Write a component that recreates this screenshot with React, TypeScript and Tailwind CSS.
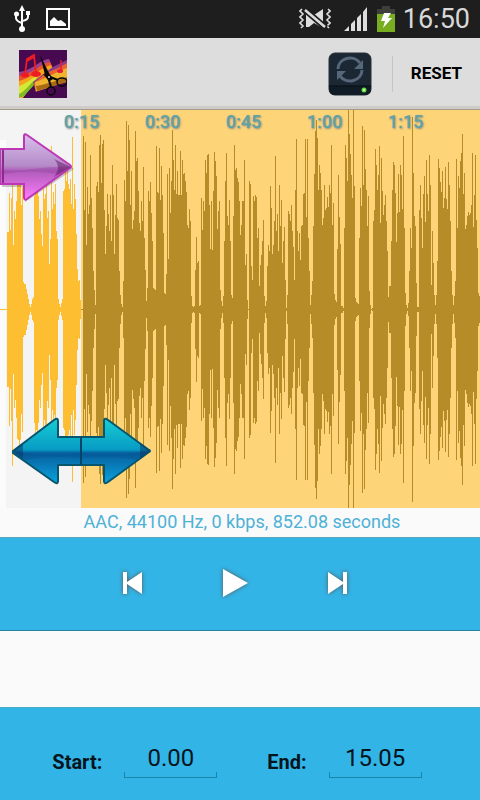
import React from 'react';

// Peak height of every sample column, measured from the centre line
const PEAKS = [
  0, 0, 0, 0, 0, 0, 0, 77, 77, 116, 79, 111, 156, 64, 98, 90, 108, 129, 130, 135,
  130, 104, 122, 27, 25, 25, 20, 15, 10, 5, 2, 5, 10, 12, 113, 128, 120, 128, 113, 90,
  98, 75, 63, 120, 110, 115, 125, 91, 98, 45, 70, 163, 100, 117, 105, 125, 78, 70, 10, 5,
  2, 6, 10, 118, 120, 138, 128, 138, 125, 120, 130, 105, 172, 100, 125, 110, 75, 40, 28, 29,
  9, 0, 0, 173, 99, 167, 64, 122, 95, 104, 154, 111, 81, 38, 19, 4, 123, 127, 117, 164,
  174, 126, 165, 169, 99, 55, 83, 115, 95, 78, 114, 68, 144, 114, 55, 94, 125, 91, 89, 38,
  14, 5, 2, 28, 129, 108, 188, 138, 184, 169, 104, 138, 80, 89, 98, 178, 148, 151, 118, 86,
  78, 108, 88, 142, 71, 39, 8, 21, 118, 108, 127, 96, 68, 21, 20, 19, 163, 117, 116, 161,
  109, 143, 114, 76, 16, 15, 35, 135, 50, 141, 96, 128, 179, 149, 119, 164, 115, 138, 114, 114,
  158, 114, 149, 135, 136, 128, 117, 84, 81, 100, 88, 13, 3, 2, 3, 39, 72, 46, 48, 3,
  4, 111, 79, 108, 98, 149, 136, 154, 155, 104, 60, 108, 59, 118, 157, 148, 133, 80, 98, 108,
  19, 8, 3, 13, 68, 128, 156, 93, 84, 109, 68, 14, 11, 93, 164, 139, 141, 131, 127, 108,
  74, 84, 108, 108, 149, 44, 55, 9, 0, 128, 125, 43, 29, 113, 108, 114, 112, 71, 81, 23,
  44, 54, 68, 89, 13, 3, 8, 43, 64, 58, 123, 101, 55, 64, 88, 153, 78, 95, 58, 124,
  83, 109, 46, 68, 82, 29, 1, 14, 98, 95, 88, 104, 78, 62, 29, 119, 170, 78, 58, 76,
  49, 83, 84, 115, 116, 170, 92, 170, 71, 38, 4, 14, 28, 83, 135, 178, 189, 171, 119, 144,
  136, 119, 84, 91, 124, 99, 101, 112, 102, 124, 116, 164, 84, 106, 15, 9, 7, 60, 134, 92,
  65, 3, 3, 1, 81, 164, 151, 128, 200, 175, 155, 134, 111, 200, 123, 11, 7, 6, 5, 71,
  121, 103, 183, 124, 179, 140, 119, 83, 113, 18, 4, 0, 1, 88, 99, 160, 144, 119, 134, 163,
  86, 151, 118, 94, 104, 114, 88, 58, 12, 23, 23, 68, 119, 147, 144, 116, 67, 96, 135, 97,
  144, 134, 100, 173, 81, 16, 4, 1, 6, 38, 81, 61, 192, 136, 93, 83, 26, 2, 2, 99,
  124, 91, 61, 115, 133, 87, 149, 115, 98, 154, 124, 24, 78, 46, 14, 4, 14, 48, 150, 141,
  127, 117, 138, 101, 111, 142, 110, 100, 147, 124, 88, 38, 14, 4, 13, 28, 150, 81, 133, 121,
  148, 156, 175, 115, 136, 80, 84, 93, 97, 94, 96, 104, 156, 82, 114, 154, 89, 61, 16, 13,
];

const SELECTION_START = 81;
const CENTER = 199;

const wavePath = (from: number, to: number) =>
  PEAKS.slice(from, to)
    .map((peak, i) => `M${from + i} ${CENTER - peak}h1v${peak * 2 + 1}h-1z`)
    .join('');

const TIMES = ['0:15', '0:30', '0:45', '1:00', '1:15'];

const StatusBar: React.FC = () => (
  <div className="flex h-[38px] shrink-0 items-center justify-between bg-[#1e1e1e] pr-[10px] pl-3">
    <div className="flex items-center gap-[14px]">
      <svg width="20" height="28" viewBox="0 0 20 28" fill="none" stroke="#fff" strokeWidth="2">
        <path d="M10 5v19M4 9v4q0 3 6 5M16 9v3q0 3-6 4" />
        <path d="M10 0l3 6H7z" fill="#fff" stroke="none" />
        <circle cx="10" cy="24" r="3" fill="#fff" stroke="none" />
        <circle cx="4.500" cy="9" r="2.500" fill="#fff" stroke="none" />
        <path d="M14 6h4v4h-4z" fill="#fff" stroke="none" />
      </svg>
      <svg width="24" height="22" viewBox="0 0 24 22">
        <path d="M1 1h22v20H1z" fill="none" stroke="#fff" strokeWidth="2" />
        <path d="M4 18v-5l4-4 4 4 3-1 5 4v2z" fill="#fff" />
      </svg>
    </div>
    <div className="flex items-center">
      <svg className="mr-3" width="32" height="22" viewBox="0 0 32 22" fill="none" stroke="#ddd">
        <path d="M3 1l-2 2 3 3-3 3 3 3-3 3 3 3-2 2M29 1l2 2-3 3 3 3-3 3 3 3-3 3 2 2" strokeWidth="1.600" />
        <path d="M7 5v14h3l5-4 9 5V1l-9 6z" fill="#ddd" stroke="none" />
        <path d="M5 1l22 19" stroke="#1e1e1e" strokeWidth="6" />
        <path d="M6 2l20 17" strokeWidth="2.500" />
      </svg>
      <svg className="mr-2" width="26" height="24" viewBox="0 0 26 24" fill="#ddd">
        <path d="M1 24l5-5v5zM8 17l4-4v11H8zM14 11l4-4v17h-4zM20 5l4-5v24h-4z" />
      </svg>
      <svg className="mr-2" width="18" height="26" viewBox="0 0 18 26">
        <path d="M5 0h8v3h5v5H0V3h5z" fill="#3d403a" />
        <path d="M0 8h18v18H0z" fill="#78ad20" />
        <path d="M7 7h7l-3 5h4L6 22l2-7H4z" fill="#fff" />
      </svg>
      <span className="text-[27px] leading-8 text-[#d8d8d8]">16:50</span>
    </div>
  </div>
);

const AppIcon: React.FC = () => (
  <svg width="48" height="48" viewBox="0 0 48 48">
    <path d="M0 0h48v48H0z" fill="#47094f" />
    <path d="M0 22C15 20 20 10 30 9l4 9C23 23 12 33 2 48H0z" fill="#9d3f90" />
    <path d="M0 26C14 24 22 13 31 12l3 7C22 23 12 34 2 48H0z" fill="#e85427" />
    <path d="M0 31c13-3 22-14 32-16l2 5C21 25 12 36 4 48H0z" fill="#f4a51e" />
    <path d="M0 36c9-3 14-9 18-10l-3 8L4 47H0z" fill="#d5e936" />
    <path d="M0 44c7-3 10-10 16-14l-1 5L4 47H0z" fill="#80bb22" />
    <path d="M31 19C37 15 42 13 48 10v23L17 42l-3-10z" fill="#8b3b87" />
    <path d="M27 23c9-3 14-6 21-10v21l-31 8-2-9z" fill="#ed642b" />
    <path d="M16 32c12-4 21-10 32-14v14l-31 10z" fill="#efb52d" />
    <path d="M17 36c12-2 21-6 31-9v5l-30 9z" fill="#a86b14" />
    <path d="M38 35l10-3v16H16v-6z" fill="#47094f" />
    <path d="M6 25l2-16 7-4 2 19M8 11l7-4" fill="none" stroke="#ed1c24" strokeWidth="1.800" />
    <ellipse cx="6" cy="25" rx="4" ry="2.500" fill="#ed1c24" />
    <ellipse cx="17" cy="24" rx="5" ry="3" fill="#ed1c24" />
    <path d="M42 10v12" stroke="#e51b38" strokeWidth="1.500" />
    <ellipse cx="41" cy="21" rx="3" ry="2" fill="#e51b38" />
    <path d="M21 5l9 18 4 6-3 2-5-6z" fill="#080808" />
    <path d="M24 24l7 1 1 4-3 1z" fill="#080808" />
    <path d="M29 27l3 10M31 27l8 3" stroke="#080808" strokeWidth="2" />
    <circle cx="32" cy="41" r="4" fill="none" stroke="#080808" strokeWidth="1.500" />
    <ellipse cx="43" cy="32" rx="5" ry="4" fill="none" stroke="#080808" strokeWidth="1.500" />
    <circle cx="30" cy="27" r="1" fill="#ddd" />
  </svg>
);

const ActionBar: React.FC = () => (
  <header className="flex h-[71px] shrink-0 items-center justify-between border-b-[3px] border-[#cfcbc8] bg-[#ddd] pt-1 pl-[19px]">
    <AppIcon />
    <div className="flex items-center">
      <button type="button" aria-label="Refresh" className="mr-5">
        <svg width="44" height="44" viewBox="0 0 44 44">
          <rect x="1" y="1" width="42" height="42" rx="6" fill="#1b2733" stroke="#26303b" />
          <path d="M1 34h42v3q0 6-6 6H7q-6 0-6-6z" fill="#111b26" />
          <path d="M1 34h42" stroke="#070d13" />
          <g fill="none" stroke="#56677a" strokeWidth="3">
            <path d="M10 17A12 11 0 0 1 32 11" />
            <path d="M34 18A12 11 0 0 1 12 24" />
          </g>
          <path d="M35 8v9h-9zM9 28v-9h9z" fill="#56677a" />
          <circle cx="36" cy="38" r="2.500" fill="#58df35" />
          <circle cx="36" cy="38" r="1.200" fill="#d0ffc0" />
        </svg>
      </button>
      <button type="button" className="h-9 border-l border-[#c4c4c4] pr-[18px] pl-[18px] text-[17px] font-bold text-black">
        RESET
      </button>
    </div>
  </header>
);

const StartHandle: React.FC = () => (
  <svg className="absolute top-[22px] left-0" width="76" height="72" viewBox="0 0 76 72">
    <defs>
      <linearGradient id="pink" x1="0" y1="0" x2="0" y2="1">
        <stop offset="0" stopColor="#d9c0ec" />
        <stop offset="0.480" stopColor="#b48bc8" />
        <stop offset="0.560" stopColor="#b05cbb" />
        <stop offset="1" stopColor="#ff7dfc" />
      </linearGradient>
    </defs>
    <path d="M2 19h23V4L74 37 25 70V55H2z" fill="#000" opacity="0.200" />
    <path d="M0 17h24V4q0-3 3-1l43 30q2 2 0 3L27 67q-3 2-3-2V52H0z" fill="url(#pink)" stroke="#bd37b4" strokeWidth="2" />
    <path d="M3 18v33" stroke="#8d2b8b" strokeWidth="2" />
    <path d="M4 38C25 40 48 33 70 35L58 42Q30 37 4 42z" fill="#8b3894" opacity="0.300" />
    <path d="M54 27l17 8-17 10q8-10 0-18z" fill="#631064" opacity="0.500" />
  </svg>
);

const EndHandle: React.FC = () => (
  <svg className="absolute bottom-[22px] left-3" width="140" height="70" viewBox="0 0 140 70">
    <defs>
      <linearGradient id="blue" x1="0" y1="0" x2="0" y2="1">
        <stop offset="0" stopColor="#16ced4" />
        <stop offset="0.480" stopColor="#079bc4" />
        <stop offset="0.530" stopColor="#075f9e" />
        <stop offset="1" stopColor="#0aa3de" />
      </linearGradient>
    </defs>
    <path d="M1 35L42 4q4-3 4 1v16h46V5q0-4 4-1l41 30q2 1 0 2L96 66q-4 3-4-1V49H46v16q0 4-4 1L1 37q-1-1 0-2z" fill="url(#blue)" stroke="#07566d" strokeWidth="2" />
    <path d="M2 35q30 6 66 2 36 4 69-2l-13 9q-25-5-56-2-32-3-54 2z" fill="#054b8c" opacity="0.300" />
    <path d="M69 21v28" stroke="#064466" strokeWidth="2" />
    <path d="M1 35l10-8v16zM138 35l-10-8v16z" fill="#073663" opacity="0.500" />
  </svg>
);

const Waveform: React.FC = () => (
  <section className="relative min-h-[300px] flex-1 border-t border-[#a39c88] bg-[#f4f4f4]">
    <svg
      className="absolute inset-0 h-full w-full"
      viewBox="0 0 480 398"
      preserveAspectRatio="none"
      shapeRendering="crispEdges"
    >
      <path d="M0 30h6v368H0z" fill="#fbfbfb" />
      <path d={`M${SELECTION_START} 0H480v398H${SELECTION_START}z`} fill="#fdd578" />
      <path d={`M2 ${CENTER}h79v1H2z`} fill="#dba63a" />
      <path d={`M82 ${CENTER}h398v1H82z`} fill="#b58c28" />
      <path d={wavePath(0, SELECTION_START)} fill="#fdbf31" />
      <path d={wavePath(SELECTION_START, 480)} fill="#b58c28" />
    </svg>
    <div className="relative flex gap-[10px] pl-[46px]">
      {TIMES.map((time) => (
        <span
          key={time}
          className="w-[71px] text-center text-lg leading-6 font-medium text-[#5fa3a6] [text-shadow:1px_1px_2px_#888]"
        >
          {time}
        </span>
      ))}
    </div>
    <StartHandle />
    <EndHandle />
  </section>
);

const Player: React.FC = () => (
  <div className="flex h-[94px] shrink-0 items-center justify-center gap-[72px] border-t border-b border-t-[#55a9b9] border-b-[#28809f] bg-[#33b4e6] pr-[10px] pb-[2px]">
    <button type="button" aria-label="Previous">
      <svg className="drop-shadow-[0_0_2px_#555]" width="28" height="32" viewBox="0 0 28 32" fill="#fff">
        <path d="M4 5h4v10L23 5v22L8 17v10H4z" />
      </svg>
    </button>
    <button type="button" aria-label="Play">
      <svg className="drop-shadow-[0_0_2px_#555]" width="32" height="36" viewBox="0 0 32 36" fill="#fff">
        <path d="M4 4l25 14L4 32z" />
      </svg>
    </button>
    <button type="button" aria-label="Next">
      <svg className="drop-shadow-[0_0_2px_#555]" width="28" height="32" viewBox="0 0 28 32" fill="#fff">
        <path d="M24 5h-4v10L5 5v22l15-10v10h4z" />
      </svg>
    </button>
  </div>
);

interface TimeFieldProps {
  id: string;
  label: string;
  value: string;
}

const TimeField: React.FC<TimeFieldProps> = ({ id, label, value }) => (
  <div className="flex items-center">
    <label htmlFor={id} className="pt-2 pr-[22px] text-xl font-bold text-[#04141c]">
      {label}
    </label>
    <div className="relative w-[93px]">
      <input
        id={id}
        type="text"
        defaultValue={value}
        className="block h-10 w-full bg-transparent text-center text-2xl text-[#04141c] outline-none"
      />
      <div className="absolute bottom-0 left-0 h-[6px] w-full border border-t-0 border-[#1b84ad]" />
    </div>
  </div>
);

const App: React.FC = () => (
  <main className="flex min-h-screen flex-col bg-[#fafafa] font-[Roboto,sans-serif]">
    <StatusBar />
    <ActionBar />
    <Waveform />
    <p className="h-[29px] shrink-0 pl-1 text-center text-lg leading-7 text-[#4eb1d6]">
      AAC, 44100 Hz, 0 kbps, 852.08 seconds
    </p>
    <Player />
    <div className="h-[76px] shrink-0" />
    <div className="flex h-[93px] shrink-0 items-center justify-center gap-[50px] border-t border-[#48abc5] bg-[#33b4e6] pt-2 pr-[6px]">
      <TimeField id="start" label="Start:" value="0.00" />
      <TimeField id="end" label="End:" value="15.05" />
    </div>
  </main>
);

export default App;
